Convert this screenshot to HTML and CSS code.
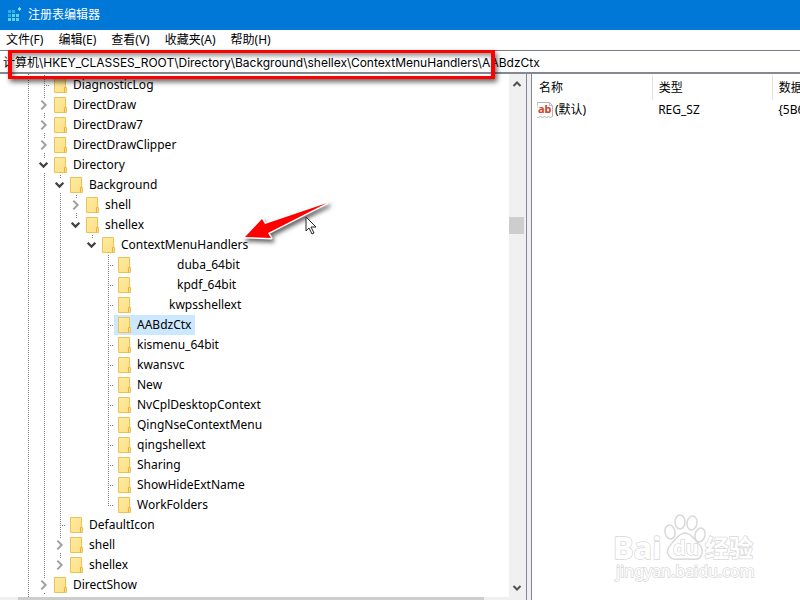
FILE: index.html
```html
<!DOCTYPE html>
<html lang="zh-CN">
<head>
<meta charset="utf-8">
<title>注册表编辑器</title>
<link rel="stylesheet" href="styles.css">
</head>
<body>
<svg class="defs" aria-hidden="true">
  <defs>
    <linearGradient id="paper" x1="0" y1="0" x2="1" y2="1"><stop offset="0" stop-color="#ffeaa3"/><stop offset="1" stop-color="#ffdf82"/></linearGradient>
    <symbol id="folder" viewBox="0 0 13 16"><path d="M.5.5h11v10h1v5H.5z" fill="url(#paper)" stroke="#eac354"/><path d="M10.500 15v-4.500h1.500" fill="none" stroke="#e2b63d"/></symbol>
    <symbol id="closed" viewBox="0 0 10 10"><path d="M3 1l4 4-4 4" fill="none" stroke="#a0a0a0" stroke-width="1.800"/></symbol>
    <symbol id="open" viewBox="0 0 10 10"><path d="M1.500 3L5 6.500 8.500 3" fill="none" stroke="#404040" stroke-width="2"/></symbol>
  </defs>
</svg>
<header class="titlebar">
  <svg class="app-icon" viewBox="0 0 16 16" aria-hidden="true"><path d="M2 3h3v3H2zM6 3h3v3H6zM2 7h3v3H2z" fill="#2bb2dc"/><path d="M6 7h3v3H6zM10 7h3v3h-3zM2 11h3v3H2zM6 11h3v3H6zM10 11h3v3h-3z" fill="#5fd0f2"/><path d="M13 0h1v1h1v2h-1v1h-1V3h-1V1h1z" fill="#7fe0ff"/></svg>
  <h1>注册表编辑器</h1>
</header>
<nav class="menubar">
  <button>文件(F)</button><button>编辑(E)</button><button>查看(V)</button><button>收藏夹(A)</button><button>帮助(H)</button>
</nav>
<div class="address">
  <input type="text" aria-label="地址" value="计算机\HKEY_CLASSES_ROOT\Directory\Background\shellex\ContextMenuHandlers\AABdzCtx">
  <div class="highlight-box"></div>
</div>
<main class="panes">
  <section class="tree-pane">
    <div class="tree-view">
      <ul class="tree root">
        <li><div class="row leaf"><span class="key"><svg><use href="#folder"/></svg>DiagnosticLog</span></div></li>
        <li><div class="row"><button aria-label="展开 DirectDraw"><svg><use href="#closed"/></svg></button><span class="key"><svg><use href="#folder"/></svg>DirectDraw</span></div></li>
        <li><div class="row"><button aria-label="展开 DirectDraw7"><svg><use href="#closed"/></svg></button><span class="key"><svg><use href="#folder"/></svg>DirectDraw7</span></div></li>
        <li><div class="row"><button aria-label="展开 DirectDrawClipper"><svg><use href="#closed"/></svg></button><span class="key"><svg><use href="#folder"/></svg>DirectDrawClipper</span></div></li>
        <li><div class="row"><button aria-label="折叠 Directory"><svg><use href="#open"/></svg></button><span class="key"><svg><use href="#folder"/></svg>Directory</span></div>
          <ul class="tree">
            <li><div class="row"><button aria-label="折叠 Background"><svg><use href="#open"/></svg></button><span class="key"><svg><use href="#folder"/></svg>Background</span></div>
              <ul class="tree">
                <li><div class="row"><button aria-label="展开 shell"><svg><use href="#closed"/></svg></button><span class="key"><svg><use href="#folder"/></svg>shell</span></div></li>
                <li><div class="row"><button aria-label="折叠 shellex"><svg><use href="#open"/></svg></button><span class="key"><svg><use href="#folder"/></svg>shellex</span></div>
                  <ul class="tree">
                    <li><div class="row"><button aria-label="折叠 ContextMenuHandlers"><svg><use href="#open"/></svg></button><span class="key"><svg><use href="#folder"/></svg>ContextMenuHandlers</span></div>
                      <ul class="tree">
                        <li><div class="row leaf"><span class="key spaced-wide"><svg><use href="#folder"/></svg>duba_64bit</span></div></li>
                        <li><div class="row leaf"><span class="key spaced-wide"><svg><use href="#folder"/></svg>kpdf_64bit</span></div></li>
                        <li><div class="row leaf"><span class="key spaced"><svg><use href="#folder"/></svg>kwpsshellext</span></div></li>
                        <li><div class="row leaf"><span class="key selected"><svg><use href="#folder"/></svg>AABdzCtx</span></div></li>
                        <li><div class="row leaf"><span class="key"><svg><use href="#folder"/></svg>kismenu_64bit</span></div></li>
                        <li><div class="row leaf"><span class="key"><svg><use href="#folder"/></svg>kwansvc</span></div></li>
                        <li><div class="row leaf"><span class="key"><svg><use href="#folder"/></svg>New</span></div></li>
                        <li><div class="row leaf"><span class="key"><svg><use href="#folder"/></svg>NvCplDesktopContext</span></div></li>
                        <li><div class="row leaf"><span class="key"><svg><use href="#folder"/></svg>QingNseContextMenu</span></div></li>
                        <li><div class="row leaf"><span class="key"><svg><use href="#folder"/></svg>qingshellext</span></div></li>
                        <li><div class="row leaf"><span class="key"><svg><use href="#folder"/></svg>Sharing</span></div></li>
                        <li><div class="row leaf"><span class="key"><svg><use href="#folder"/></svg>ShowHideExtName</span></div></li>
                        <li><div class="row leaf"><span class="key"><svg><use href="#folder"/></svg>WorkFolders</span></div></li>
                      </ul>
                    </li>
                  </ul>
                </li>
              </ul>
            </li>
            <li><div class="row leaf"><span class="key"><svg><use href="#folder"/></svg>DefaultIcon</span></div></li>
            <li><div class="row"><button aria-label="展开 shell"><svg><use href="#closed"/></svg></button><span class="key"><svg><use href="#folder"/></svg>shell</span></div></li>
            <li><div class="row"><button aria-label="展开 shellex"><svg><use href="#closed"/></svg></button><span class="key"><svg><use href="#folder"/></svg>shellex</span></div></li>
          </ul>
        </li>
        <li><div class="row"><button aria-label="展开 DirectShow"><svg><use href="#closed"/></svg></button><span class="key"><svg><use href="#folder"/></svg>DirectShow</span></div></li>
      </ul>
      <div class="hscroll"><div class="hthumb"></div></div>
    </div>
    <div class="vscroll">
      <svg class="scroll-arrow" viewBox="0 0 10 10"><path d="M1.500 7L5 3.500 8.500 7" fill="none" stroke="#505050" stroke-width="2"/></svg>
      <div class="track"><div class="vthumb"></div></div>
      <svg class="scroll-arrow" viewBox="0 0 10 10"><path d="M1.500 3L5 6.500 8.500 3" fill="none" stroke="#505050" stroke-width="2"/></svg>
    </div>
  </section>
  <div class="splitter"></div>
  <section class="values">
    <table>
      <thead><tr><th>名称</th><th>类型</th><th>数据</th></tr></thead>
      <tbody><tr>
        <td class="name"><span class="value-name"><svg class="value-icon" viewBox="0 0 16 16" aria-hidden="true"><path d="M.5.5h12l3 3v11l-2 1-2-1-2 1-2-1-2 1-2-1-2 1-3-1z" fill="#fff" stroke="#b5b5b5"/><path d="M12.500.5v3h3" fill="none" stroke="#b5b5b5"/><text x="1" y="11" class="ab">ab</text></svg>(默认)</span></td>
        <td>REG_SZ</td><td>{5B6</td>
      </tr></tbody>
    </table>
  </section>
</main>
<svg class="arrow" viewBox="0 0 100 52" aria-hidden="true"><path d="M4 38L21 20l3 5L86 4 27 34l3 5z" fill="#f00" stroke="#fff" stroke-width="3" stroke-linejoin="round" paint-order="stroke"/></svg>
<svg class="cursor" viewBox="0 0 13 19" aria-hidden="true"><path d="M1 1v14l3-3 3 6 2-1-3-6h5z" fill="#fff" stroke="#222"/></svg>
<svg class="watermark" viewBox="0 0 150 76">
  <g fill="#fff" stroke="#d9d9d9" stroke-width="1.500">
    <ellipse cx="58" cy="22" rx="5" ry="7" transform="rotate(-12 58 22)"/><ellipse cx="68" cy="12" rx="5" ry="7"/><ellipse cx="80" cy="13" rx="5" ry="7" transform="rotate(10 80 13)"/><ellipse cx="88" cy="25" rx="5" ry="7" transform="rotate(15 88 25)"/>
    <path d="M73 23c-6 0-9 6-13 10-5 5-6 9-3 13 4 5 10 3 17 3s12 2 15-3c3-5 1-9-3-13-4-4-7-10-13-10z"/>
  </g>
  <text class="wm-logo" x="1" y="49">Bai</text>
  <text class="wm-du" x="61" y="45">du</text>
  <text class="wm-cn" x="93" y="47">经验</text>
  <text class="wm-url" x="4" y="67">jingyan.baidu.com</text>
</svg>
</body>
</html>
```
FILE: styles.css
```css
* { box-sizing: border-box; }
body {
  margin: 0;
  height: 100vh;
  display: flex;
  flex-direction: column;
  overflow: hidden;
  position: relative;
  background: #fff;
  color: #000;
  font: 12px/20px "Noto Sans", "Noto Sans CJK SC", sans-serif;
}
.defs { position: absolute; width: 0; height: 0; }
button, input { font: inherit; color: inherit; border: 0; padding: 0; background: none; }
.titlebar {
  display: flex;
  align-items: center;
  gap: 6px;
  flex: none;
  height: 30px;
  padding-left: 6px;
  background: #0078d7;
  color: #fff;
}
.titlebar h1 { margin: 0; font-size: 12px; font-weight: 400; }
.app-icon { width: 16px; height: 16px; }
.menubar { display: flex; flex: none; gap: 15px; padding-left: 6px; height: 20px; }
.address {
  flex: none;
  position: relative;
  height: 24px;
  border-top: 1px solid #7a7d85;
  border-bottom: 2px solid #858892;
}
.address input {
  display: block;
  width: 100%;
  height: 21px;
  padding-left: 3px;
  outline: 0;
  font-family: Inter, "Noto Sans CJK SC", sans-serif;
}
.highlight-box {
  position: absolute;
  z-index: 2;
  left: 8px;
  top: -1px;
  width: 487px;
  height: 29px;
  border: solid #f00;
  border-width: 3px 4px;
  box-shadow: 2px 3px 5px rgba(0, 0, 0, .6), inset 2px 3px 4px rgba(0, 0, 0, .4);
}
.panes { flex: 1; min-height: 0; display: grid; grid-template-columns: 527fr 5px 268fr; }
.tree-pane { display: flex; min-width: 0; min-height: 0; border-right: 1px solid #828790; }
.tree-view { flex: 1; min-width: 0; display: flex; flex-direction: column; }
.tree { list-style: none; margin: 0; padding-left: 16px; }
.root {
  flex: 1;
  min-height: 0;
  overflow: hidden;
  padding: 1px 0 0 36px;
  background: repeating-linear-gradient(#808080 0 1px, #fff 1px 2px) 28px 0 / 1px 100% no-repeat;
}
.tree li { background: repeating-linear-gradient(#808080 0 1px, #fff 1px 2px) 8px 0 / 1px 100% no-repeat; }
.tree .tree > li:last-child { background-size: 1px 10px; }
.row { display: flex; height: 20px; }
.row button { flex: none; width: 14px; height: 14px; margin-top: 3px; padding-left: 2px; background: #fff; }
.row button svg { display: block; width: 11px; height: 14px; }
.leaf { padding-left: 14px; background: repeating-linear-gradient(90deg, #808080 0 1px, #fff 1px 2px) 8px 10px / 6px 1px no-repeat; }
.key { display: flex; align-items: center; gap: 6px; padding: 0 4px; white-space: nowrap; }
.key svg { width: 13px; height: 16px; }
.spaced { gap: 38px; }
.spaced-wide { gap: 46px; }
.selected { background: #cce8ff; }
.hscroll { flex: none; height: 3px; padding-left: 18px; background: #f0f0f0; }
.hthumb { width: 95%; height: 3px; background: #cdcdcd; }
.vscroll { flex: none; width: 17px; display: flex; flex-direction: column; align-items: center; padding: 5px 2px 7px 0; background: #f0f0f0; }
.scroll-arrow { width: 10px; height: 10px; }
.track { flex: 1; width: 100%; padding-top: 128px; }
.vthumb { height: 17px; background: #cdcdcd; }
.splitter { background: #f0f0f0; border-right: 1px solid #828790; }
.values { overflow: hidden; min-width: 0; }
table { width: 361px; margin-top: 1px; table-layout: fixed; border-collapse: collapse; }
th, td { width: 120px; padding: 0 0 0 6px; font-weight: 400; text-align: left; white-space: nowrap; }
th { height: 25px; border-right: 1px solid #e2e2e2; }
th:first-child { padding-left: 7px; }
td { height: 20px; }
.name { padding-left: 5px; }
.value-name { display: flex; align-items: center; gap: 2px; }
.value-icon { width: 16px; height: 16px; }
.ab { font: bold 11px "Noto Sans", sans-serif; fill: #d0432b; }
.arrow { position: absolute; left: 241px; top: 199px; width: 100px; height: 52px; filter: drop-shadow(2px 3px 2px rgba(0, 0, 0, .6)); }
.cursor { position: absolute; left: 305px; top: 216px; width: 13px; height: 19px; }
.watermark { position: absolute; right: 38px; bottom: 14px; width: 150px; height: 76px; }
.watermark text { fill: #fff; stroke: #d9d9d9; stroke-width: 1.5px; paint-order: stroke; }
.wm-logo { font: bold 31px "Noto Sans", sans-serif; }
.wm-du { font: bold 20px "Noto Sans", sans-serif; }
.wm-cn { font: bold 24px "Noto Sans CJK SC", sans-serif; }
.wm-url { font: 16px "Noto Sans", sans-serif; }
```
